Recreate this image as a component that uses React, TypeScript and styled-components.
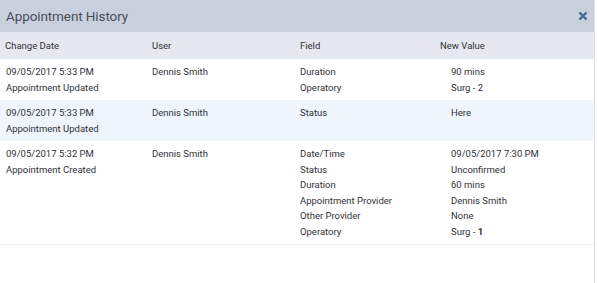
import React from "react";
import styled, { createGlobalStyle } from "styled-components";

const GlobalStyle = createGlobalStyle`
  html, body {
    margin: 0;
    padding: 0;
    background: #ffffff;
  }
  body {
    font-family: Roboto, "Liberation Sans", Arial, sans-serif;
  }
`;

const Panel = styled.div`
  width: 594px;
  height: 283px;
  background: #fff;
  border-right: 1px solid #d9dde4;
`;

const TitleBar = styled.div`
  height: 32px;
  background: #c8d0de;
  display: flex;
  align-items: center;
  justify-content: space-between;
  padding: 0 6px;
  box-sizing: border-box;
`;

const Title = styled.h2`
  margin: 0;
  font-size: 13.5px;
  font-weight: 400;
  color: #4a4f57;
  letter-spacing: -0.1px;
`;

const CloseBtn = styled.button`
  border: 0;
  background: transparent;
  padding: 0;
  width: 10px;
  height: 10px;
  display: flex;
  cursor: pointer;
`;

const HeadRow = styled.div`
  height: 27px;
  background: #e6e8f1;
  display: grid;
  grid-template-columns: 147px 148px 140px 1fr;
  align-items: center;
  padding-left: 5px;
  font-size: 9.5px;
  color: #2f3236;
`;

const Row = styled.div<{ $shaded?: boolean; $last?: boolean }>`
  display: grid;
  grid-template-columns: 146px 148px 1fr;
  padding: 5px 0 5px 6px;
  background: ${({ $shaded }) => ($shaded ? "#eef5fd" : "#ffffff")};
  border-bottom: ${({ $last }) => ($last ? "1px solid #eceef1" : "none")};
  font-size: 9.5px;
  line-height: 15.5px;
  color: #2f3236;
`;

const Cell = styled.div`
  display: flex;
  flex-direction: column;
`;

const ChangeLine = styled.div`
  display: grid;
  grid-template-columns: 151px 1fr;
`;

type Change = [string, React.ReactNode];

interface Entry {
  date: string;
  action: string;
  user: string;
  changes: Change[];
}

const entries: Entry[] = [
  {
    date: "09/05/2017 5:33 PM",
    action: "Appointment Updated",
    user: "Dennis Smith",
    changes: [
      ["Duration", "90 mins"],
      ["Operatory", "Surg - 2"],
    ],
  },
  {
    date: "09/05/2017 5:33 PM",
    action: "Appointment Updated",
    user: "Dennis Smith",
    changes: [["Status", "Here"]],
  },
  {
    date: "09/05/2017 5:32 PM",
    action: "Appointment Created",
    user: "Dennis Smith",
    changes: [
      ["Date/Time", "09/05/2017 7:30 PM"],
      ["Status", "Unconfirmed"],
      ["Duration", "60 mins"],
      ["Appointment Provider", "Dennis Smith"],
      ["Other Provider", "None"],
      ["Operatory", <>Surg - <b>1</b></>],
    ],
  },
];

export default function App() {
  return (
    <>
      <GlobalStyle />
      <Panel>
        <TitleBar>
          <Title>Appointment History</Title>
          <CloseBtn aria-label="Close">
            <svg width="10" height="10" viewBox="0 0 10 10">
              <path d="M1.5 1.5 L8.5 8.5 M8.5 1.5 L1.5 8.5" stroke="#3d6c8e" strokeWidth="2.4" />
            </svg>
          </CloseBtn>
        </TitleBar>
        <HeadRow>
          <span>Change Date</span>
          <span>User</span>
          <span>Field</span>
          <span>New Value</span>
        </HeadRow>
        {entries.map((e, i) => (
          <Row key={i} $shaded={i === 1} $last={i === entries.length - 1}>
            <Cell>
              <span>{e.date}</span>
              <span>{e.action}</span>
            </Cell>
            <Cell>
              <span>{e.user}</span>
            </Cell>
            <Cell>
              {e.changes.map(([f, v], j) => (
                <ChangeLine key={j}>
                  <span>{f}</span>
                  <span>{v}</span>
                </ChangeLine>
              ))}
            </Cell>
          </Row>
        ))}
      </Panel>
    </>
  );
}
